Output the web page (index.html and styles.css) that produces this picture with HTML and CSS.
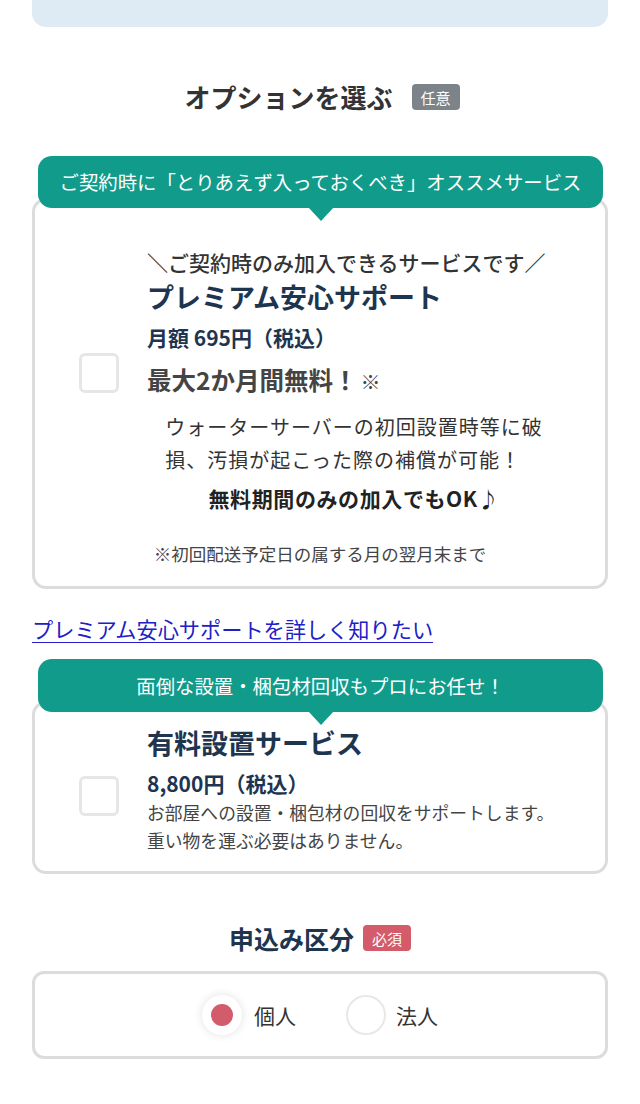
FILE: index.html
```html
<!DOCTYPE html>
<html lang="ja">
<head>
<meta charset="utf-8">
<title>オプションを選ぶ</title>
<link rel="stylesheet" href="styles.css">
</head>
<body>
<div class="page">
  <div class="top-box"></div>

  <h2 class="sec-title"><span class="sec-text">オプションを選ぶ</span><span class="badge badge-gray">任意</span></h2>

  <div class="option">
    <div class="banner">ご契約時に「とりあえず入っておくべき」オススメサービス</div>
    <div class="card card-first">
      <div class="card-row">
        <span class="check check-first"></span>
        <div class="card-body">
          <p class="lead">＼ご契約時のみ加入できるサービスです／</p>
          <p class="name">プレミアム安心サポート</p>
          <p class="price">月額 695円（税込）</p>
          <p class="free">最大2か月間無料！<span class="mark">※</span></p>
          <div class="desc-wrap">
            <p class="desc">ウォーターサーバーの初回設置時等に破<br>損、汚損が起こった際の補償が可能！</p>
          </div>
          <p class="ok">無料期間のみの加入でもOK♪</p>
        </div>
      </div>
      <p class="note">※初回配送予定日の属する月の翌月末まで</p>
    </div>
  </div>

  <a class="more-link" href="#">プレミアム安心サポートを詳しく知りたい</a>

  <div class="option option-second">
    <div class="banner">面倒な設置・梱包材回収もプロにお任せ！</div>
    <div class="card card-second">
      <div class="card-row">
        <span class="check check-second"></span>
        <div class="card-body">
          <p class="name">有料設置サービス</p>
          <p class="price price-second">8,800円（税込）</p>
          <p class="small">お部屋への設置・梱包材の回収をサポートします。<br>重い物を運ぶ必要はありません。</p>
        </div>
      </div>
    </div>
  </div>

  <h2 class="sec-title sec-title-apply"><span class="sec-text sec-text-navy">申込み区分</span><span class="badge badge-red">必須</span></h2>

  <div class="radio-box">
    <label class="radio-item">
      <span class="radio radio-on"><span class="dot"></span></span>
      <span class="radio-label">個人</span>
    </label>
    <label class="radio-item radio-item-second">
      <span class="radio"></span>
      <span class="radio-label">法人</span>
    </label>
  </div>
</div>
</body>
</html>
```

FILE: styles.css
```css
* { box-sizing: border-box; }
html, body { margin: 0; padding: 0; background: #fff; }
body {
  font-family: "Noto Sans CJK JP", "Noto Sans", sans-serif;
  color: #333;
}
p { margin: 0; }
.page { width: 640px; padding: 0 32px 40px; }

.top-box {
  height: 27px;
  background: #deeaf4;
  border-radius: 0 0 14px 14px;
}

.sec-title {
  margin: 52px 0 0;
  display: flex;
  justify-content: center;
  align-items: center;
  font-weight: 700;
  font-size: 26px;
  line-height: 36px;
  color: #333;
}
.sec-text { padding-left: 4px; }
.sec-text-navy { color: #1e3550; font-size: 25px; padding-left: 0; }
.badge {
  display: inline-flex;
  align-items: center;
  justify-content: center;
  width: 48px;
  height: 26px;
  border-radius: 4px;
  color: #fff;
  font-size: 15px;
  font-weight: 400;
  line-height: 1;
}
.badge-gray { background: #7c8389; margin-left: 19px; }
.badge-red { background: #d45b6a; margin-left: 9px; }

.option { margin-top: 41px; }
.option-second { margin-top: 15px; }

.banner {
  position: relative;
  z-index: 1;
  margin: 0 5px 0 6px;
  height: 52px;
  background: #119b8b;
  border-radius: 14px;
  color: #fff;
  font-size: 19.4px;
  line-height: 52px;
  text-align: center;
  white-space: nowrap;
}
.banner::after {
  content: "";
  position: absolute;
  left: 50%;
  bottom: -13px;
  margin-left: -13px;
  border-left: 13px solid transparent;
  border-right: 13px solid transparent;
  border-top: 14px solid #119b8b;
}
.option-second .banner { height: 53px; line-height: 53px; }

.card {
  margin-top: -10px;
  border: 3px solid #dcdcdc;
  border-radius: 14px;
  padding: 46px 44px 19px;
}
.card-second { margin-top: -11px; padding: 20px 44px 17px; }

.card-row { display: flex; align-items: flex-start; gap: 28px; }
.check {
  flex: 0 0 40px;
  width: 40px;
  height: 40px;
  border: 3px solid #e6e6e6;
  border-radius: 6px;
  background: #fff;
}
.check-first { margin-top: 106px; }
.check-second { margin-top: 52px; }
.card-body { flex: 1; min-width: 0; }

.lead {
  font-size: 21px;
  line-height: 30px;
  font-weight: 500;
  color: #333;
  white-space: nowrap;
}
.name {
  margin-top: 1px;
  font-size: 27px;
  line-height: 38px;
  font-weight: 700;
  color: #1e3550;
  white-space: nowrap;
}
.card-second .name { margin-top: 0; }
.price {
  margin-top: 6px;
  font-size: 21px;
  line-height: 30px;
  font-weight: 700;
  color: #1e3550;
}
.free {
  margin-top: 11px;
  font-size: 24.5px;
  line-height: 34px;
  font-weight: 700;
  color: #444;
}
.mark { font-weight: 400; font-size: 20px; margin-left: 3px; }
.desc-wrap { text-align: center; margin-top: 11px; }
.desc {
  display: inline-block;
  text-align: left;
  font-size: 20px;
  letter-spacing: 1px;
  line-height: 33px;
  color: #333;
  white-space: nowrap;
}
.ok {
  margin-top: 7px;
  text-align: center;
  font-size: 21px;
  letter-spacing: 0.6px;
  line-height: 30px;
  font-weight: 700;
  color: #222;
}
.note {
  margin-top: 28px;
  text-align: center;
  font-size: 17.5px;
  line-height: 26px;
  color: #444;
  white-space: nowrap;
}
.small {
  font-size: 17.8px;
  line-height: 28px;
  color: #444;
  white-space: nowrap;
}

.more-link {
  display: block;
  margin-top: 25px;
  font-size: 21.2px;
  line-height: 30px;
  color: #2020c8;
  text-decoration: underline;
  text-underline-offset: 4px;
  text-decoration-thickness: 1px;
}

.sec-title-apply { margin-top: 47px; line-height: 34px; }

.radio-box {
  margin-top: 16px;
  height: 88px;
  border: 3px solid #dcdcdc;
  border-radius: 12px;
  display: flex;
  justify-content: center;
  align-items: center;
}
.radio-item { display: flex; align-items: center; }
.radio-item-second { margin-left: 50px; }
.radio {
  width: 40px;
  height: 40px;
  border-radius: 50%;
  background: #fff;
  border: 2px solid #e8e8e8;
  display: flex;
  align-items: center;
  justify-content: center;
}
.radio-on {
  border: none;
  box-shadow: 0 0 10px rgba(0, 0, 0, 0.12);
}
.dot {
  width: 22px;
  height: 22px;
  border-radius: 50%;
  background: #d35c6c;
}
.radio-label {
  margin-left: 12px;
  font-size: 21px;
  line-height: 30px;
  color: #333;
}
.radio-item-second .radio-label { margin-left: 10px; }
```
